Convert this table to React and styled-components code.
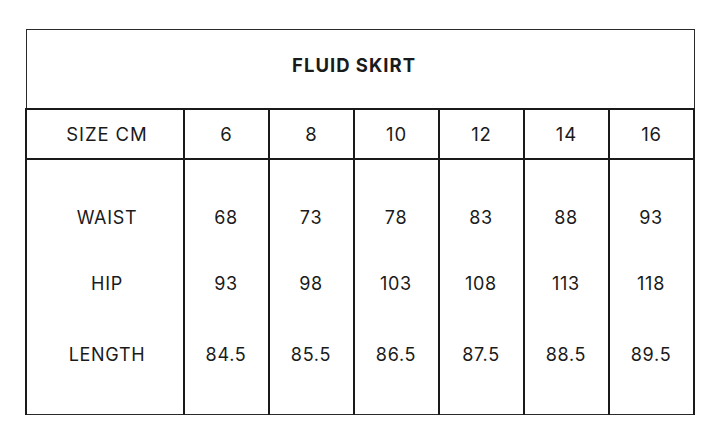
import React from "react";
import styled, { createGlobalStyle } from "styled-components";

const GlobalStyle = createGlobalStyle`
  html, body {
    margin: 0;
    padding: 0;
    background: #ffffff;
  }
  body {
    font-family: Inter, "Liberation Sans", sans-serif;
    color: #1a1a1a;
  }
`;

const Page = styled.div`
  width: 720px;
  height: 432px;
  padding: 29px 0 0 25px;
  box-sizing: border-box;
`;

const Table = styled.table`
  width: 667px;
  border-collapse: collapse;
  table-layout: fixed;
  border: 1.5px solid #2a2a2a;
`;

const TitleCell = styled.th`
  height: 79px;
  padding: 0 12px 8px 0;
  box-sizing: border-box;
  font-size: 18.5px;
  font-weight: 700;
  letter-spacing: 1px;
  text-align: center;
  border-bottom: 2px solid #1a1a1a;
`;

const HeadCell = styled.td`
  height: 50px;
  padding: 0 0 0 ${(p) => (p.$label ? 4 : 0)}px;
  box-sizing: border-box;
  font-size: 18.5px;
  font-weight: 400;
  letter-spacing: 0.9px;
  text-align: center;
  vertical-align: middle;
  border: 2px solid #1a1a1a;
`;

const BodyRow = styled.tr`
  & > td {
    padding-top: ${(p) => p.$top}px;
    padding-bottom: ${(p) => p.$bottom}px;
  }
`;

const BodyCell = styled.td`
  padding-left: ${(p) => (p.$label ? 5 : 0)}px;
  line-height: 20px;
  font-size: 18px;
  letter-spacing: 0.7px;
  text-align: center;
  vertical-align: top;
  border-left: 2px solid #1a1a1a;
  border-right: 2px solid #1a1a1a;
`;

const sizes = ["6", "8", "10", "12", "14", "16"];

const rows = [
  { label: "WAIST", values: ["68", "73", "78", "83", "88", "93"], top: 48, bottom: 23 },
  { label: "HIP", values: ["93", "98", "103", "108", "113", "118"], top: 23, bottom: 25 },
  { label: "LENGTH", values: ["84.5", "85.5", "86.5", "87.5", "88.5", "89.5"], top: 26, bottom: 49 },
];

export default function App() {
  return (
    <>
      <GlobalStyle />
      <Page>
        <Table>
          <colgroup>
            <col style={{ width: 158 }} />
            {sizes.map((s) => (
              <col key={s} style={{ width: 85 }} />
            ))}
          </colgroup>
          <thead>
            <tr>
              <TitleCell colSpan={7}>FLUID SKIRT</TitleCell>
            </tr>
            <tr>
              <HeadCell $label>SIZE CM</HeadCell>
              {sizes.map((s) => (
                <HeadCell key={s}>{s}</HeadCell>
              ))}
            </tr>
          </thead>
          <tbody>
            {rows.map((row) => (
              <BodyRow key={row.label} $top={row.top} $bottom={row.bottom}>
                <BodyCell $label>{row.label}</BodyCell>
                {row.values.map((v, i) => (
                  <BodyCell key={i}>{v}</BodyCell>
                ))}
              </BodyRow>
            ))}
          </tbody>
        </Table>
      </Page>
    </>
  );
}
